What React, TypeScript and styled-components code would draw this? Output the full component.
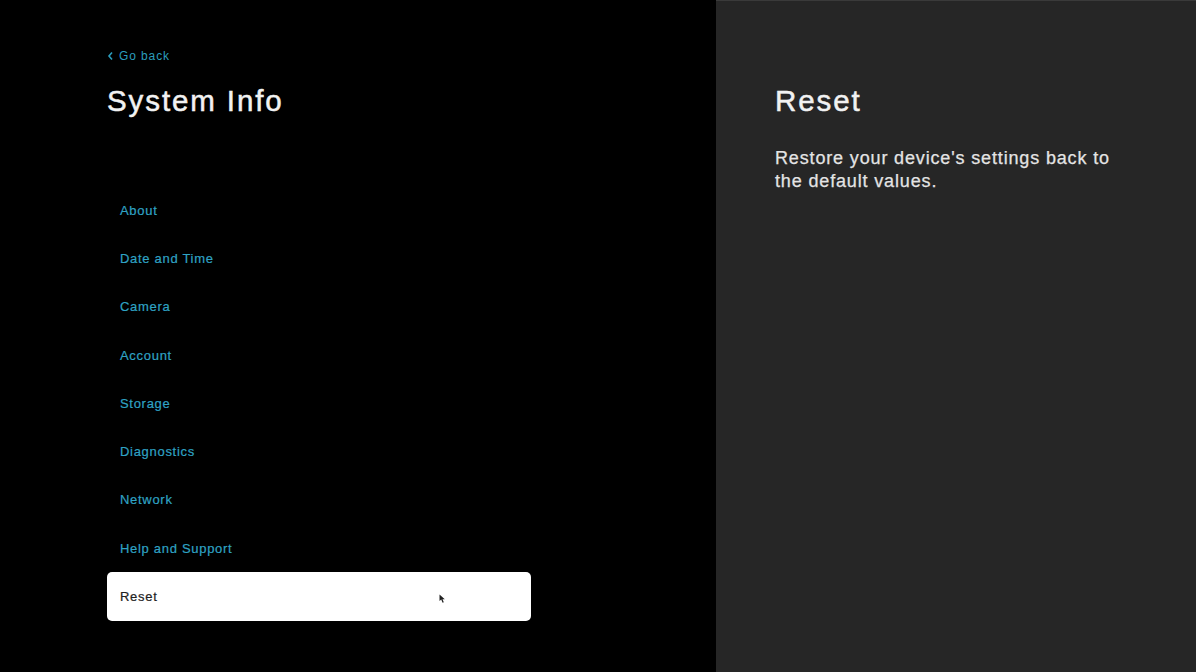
import React from "react";
import styled, { createGlobalStyle } from "styled-components";

const Global = createGlobalStyle`
  html, body { margin: 0; padding: 0; background: #000; }
  body { font-family: "Liberation Sans", Arial, sans-serif; -webkit-font-smoothing: antialiased; }
`;

const Screen = styled.div`
  display: grid;
  grid-template-columns: 716px 1fr;
  width: 1196px;
  height: 672px;
  overflow: hidden;
`;

const LeftPane = styled.section`
  background: #000;
  padding: 48px 0 0 107px;
  display: flex;
  flex-direction: column;
`;

const RightPane = styled.section`
  background: #262626;
  border-top: 1px solid #3a3a3a;
  padding: 83px 0 0 59px;
  display: flex;
  flex-direction: column;
`;

const BackLink = styled.a`
  display: flex;
  align-items: center;
  gap: 5px;
  color: #2b9dbd;
  font-size: 12px;
  letter-spacing: 0.9px;
  height: 16px;
  text-decoration: none;
  cursor: pointer;
`;

const Title = styled.h1`
  margin: 20px 0 0;
  color: #f2f2f2;
  font-size: 29.5px;
  font-weight: 400;
  line-height: 34px;
  letter-spacing: 1.9px;
  -webkit-text-stroke: 0.5px #f2f2f2;
`;

const Menu = styled.ul`
  list-style: none;
  margin: 68px 0 0;
  padding: 0;
  width: 424px;
  display: flex;
  flex-direction: column;
`;

const Item = styled.li<{ $active?: boolean }>`
  position: relative;
  height: 48.3px;
  display: flex;
  align-items: center;
  padding-left: 13px;
  font-size: 13px;
  letter-spacing: 0.7px;
  color: ${(p) => (p.$active ? "#222" : "#2fa3c4")};
  -webkit-text-stroke: 0.2px ${(p) => (p.$active ? "#222" : "#2fa3c4")};
  background: ${(p) => (p.$active ? "#fff" : "transparent")};
  border-radius: 5px;
`;

const Cursor = styled.svg`
  position: absolute;
  left: 332px;
  top: 22px;
`;

const PanelTitle = styled.h2`
  margin: 0;
  color: #f2f2f2;
  font-size: 29.5px;
  font-weight: 400;
  line-height: 34px;
  letter-spacing: 1.9px;
  -webkit-text-stroke: 0.5px #f2f2f2;
`;

const Description = styled.p`
  margin: 28.5px 0 0;
  color: #e4e4e4;
  font-size: 18px;
  line-height: 23px;
  letter-spacing: 0.85px;
  -webkit-text-stroke: 0.25px #e4e4e4;
  width: 350px;
`;

const items = [
  "About",
  "Date and Time",
  "Camera",
  "Account",
  "Storage",
  "Diagnostics",
  "Network",
  "Help and Support",
  "Reset",
];

export default function App() {
  return (
    <>
      <Global />
      <Screen>
        <LeftPane>
          <BackLink>
            <svg width="7" height="10" viewBox="0 0 7 10">
              <path d="M5 1.5 L2 5 L5 8.5" stroke="#2b9dbd" strokeWidth="1.6" fill="none" />
            </svg>
            Go back
          </BackLink>
          <Title>System Info</Title>
          <Menu>
            {items.map((it) => (
              <Item key={it} $active={it === "Reset"}>
                {it}
                {it === "Reset" && (
                  <Cursor width="7" height="10" viewBox="0 0 7 10">
                    <path d="M0.5 0.5 L0.5 7 L2.2 5.6 L3.6 8.8 L4.8 8.3 L3.5 5.2 L5.8 5.2 Z" fill="#222" />
                  </Cursor>
                )}
              </Item>
            ))}
          </Menu>
        </LeftPane>
        <RightPane>
          <PanelTitle>Reset</PanelTitle>
          <Description>Restore your device's settings back to the default values.</Description>
        </RightPane>
      </Screen>
    </>
  );
}
